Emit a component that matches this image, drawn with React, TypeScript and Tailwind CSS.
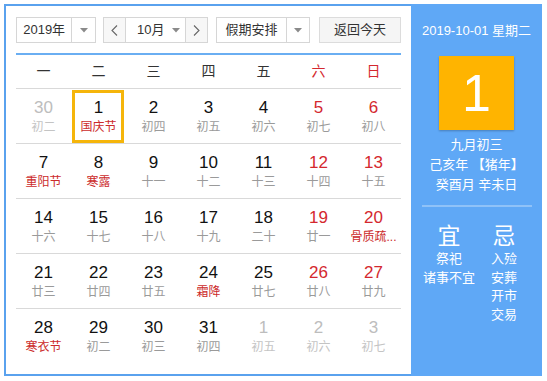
import React from "react";

type Cell = { d: number; l: string; other?: boolean; redNum?: boolean; redL?: boolean; sel?: boolean };

const rows: Cell[][] = [
  [
    { d: 30, l: "初二", other: true },
    { d: 1, l: "国庆节", redL: true, sel: true },
    { d: 2, l: "初四" },
    { d: 3, l: "初五" },
    { d: 4, l: "初六" },
    { d: 5, l: "初七", redNum: true },
    { d: 6, l: "初八", redNum: true },
  ],
  [
    { d: 7, l: "重阳节", redL: true },
    { d: 8, l: "寒露", redL: true },
    { d: 9, l: "十一" },
    { d: 10, l: "十二" },
    { d: 11, l: "十三" },
    { d: 12, l: "十四", redNum: true },
    { d: 13, l: "十五", redNum: true },
  ],
  [
    { d: 14, l: "十六" },
    { d: 15, l: "十七" },
    { d: 16, l: "十八" },
    { d: 17, l: "十九" },
    { d: 18, l: "二十" },
    { d: 19, l: "廿一", redNum: true },
    { d: 20, l: "骨质疏...", redNum: true, redL: true },
  ],
  [
    { d: 21, l: "廿三" },
    { d: 22, l: "廿四" },
    { d: 23, l: "廿五" },
    { d: 24, l: "霜降", redL: true },
    { d: 25, l: "廿七" },
    { d: 26, l: "廿八", redNum: true },
    { d: 27, l: "廿九", redNum: true },
  ],
  [
    { d: 28, l: "寒衣节", redL: true },
    { d: 29, l: "初二" },
    { d: 30, l: "初三" },
    { d: 31, l: "初四" },
    { d: 1, l: "初五", other: true },
    { d: 2, l: "初六", other: true },
    { d: 3, l: "初七", other: true },
  ],
];

const weekdays = ["一", "二", "三", "四", "五", "六", "日"];

function Caret() {
  return (
    <svg width="8" height="5" viewBox="0 0 8 5">
      <polygon points="0,0 8,0 4,4.5" fill="#8a8a8a" />
    </svg>
  );
}

function Chevron({ dir }: { dir: "l" | "r" }) {
  return (
    <svg width="7" height="11" viewBox="0 0 7 11">
      <polyline
        points={dir === "l" ? "6,0.5 1,5.5 6,10.5" : "1,0.5 6,5.5 1,10.5"}
        fill="none"
        stroke="#666"
        strokeWidth="1.1"
      />
    </svg>
  );
}

export default function App() {
  return (
    <div className="w-[547px] h-[381px] bg-white pt-[4px] pl-[4px] font-['Liberation_Sans','Noto_Sans_CJK_SC',sans-serif]">
      <div className="flex w-[538px] h-[372px]">
        {/* calendar */}
        <div className="w-[407px] h-full border-2 border-r-0 border-[#5aa2ee] px-[10px] pt-[11px] flex flex-col">
          {/* header */}
          <div className="flex h-[26px] text-[13px] text-[#333]">
            <div className="w-[80px] h-full flex border border-[#d6d6d6] bg-white">
              <div className="w-[55px] flex items-center justify-center">2019年</div>
              <div className="w-[24px] border-l border-[#d6d6d6] flex items-center justify-center">
                <Caret />
              </div>
            </div>
            <div className="ml-[7px] w-[105px] h-full flex border border-[#d6d6d6] bg-white">
              <div className="w-[21px] flex items-center justify-center bg-[#f7f7f7]">
                <Chevron dir="l" />
              </div>
              <div className="flex-1 border-l border-r border-[#d6d6d6] flex items-center pl-[11px] gap-[8px]">
                <span>10月</span>
                <Caret />
              </div>
              <div className="w-[21px] flex items-center justify-center bg-[#f7f7f7]">
                <Chevron dir="r" />
              </div>
            </div>
            <div className="ml-[8px] w-[94px] h-full flex border border-[#d6d6d6] bg-white">
              <div className="w-[69px] flex items-center justify-center">假期安排</div>
              <div className="flex-1 border-l border-[#d6d6d6] flex items-center justify-center">
                <Caret />
              </div>
            </div>
            <div className="ml-[9px] w-[82px] h-full border border-[#dcdcdc] bg-[#f5f5f5] flex items-center justify-center">
              返回今天
            </div>
          </div>
          <div className="mt-[10px] h-[2px] bg-[#6aaef2]" />
          {/* weekdays */}
          <div className="grid grid-cols-7 h-[34px] border-b border-[#d9d9d9] text-[14px]">
            {weekdays.map((w, i) => (
              <div
                key={w}
                className={`flex items-center justify-center ${i >= 5 ? "text-[#d4282e]" : "text-[#333]"}`}
              >
                {w}
              </div>
            ))}
          </div>
          {rows.map((r, ri) => (
            <div
              key={ri}
              className={`grid grid-cols-7 h-[55px] ${ri < rows.length - 1 ? "border-b border-[#d9d9d9]" : ""}`}
            >
              {r.map((c, ci) => (
                <div key={ci} className="relative flex flex-col items-center pt-[9px]">
                  {c.sel && (
                    <div className="absolute left-[1px] right-[2px] top-[1px] bottom-0 border-[3px] border-[#f5b50a]" />
                  )}
                  <div
                    className={`text-[17px] leading-[20px] ${
                      c.other ? "text-[#bdbdbd]" : c.redNum ? "text-[#d4282e]" : "text-[#111]"
                    }`}
                  >
                    {c.d}
                  </div>
                  <div
                    className={`text-[12px] leading-[16px] mt-[1px] whitespace-nowrap ${
                      c.other ? "text-[#c4c4c4]" : c.redL ? "text-[#cc2b2b]" : "text-[#9a9a9a]"
                    }`}
                  >
                    {c.l}
                  </div>
                </div>
              ))}
            </div>
          ))}
        </div>
        {/* sidebar */}
        <div className="w-[131px] h-full bg-[#5fa8f6] flex flex-col items-center text-white pt-[18px]">
          <div className="text-[13px] leading-[18px]">2019-10-01 星期二</div>
          <div className="mt-[16px] w-[75px] h-[74px] bg-[#ffb400] shadow-[0_1px_2px_rgba(0,0,0,0.25)] flex items-center justify-center text-[52px] leading-none text-white">
            1
          </div>
          <div className="mt-[5px] text-[13px] leading-[20px] text-center">
            <div>九月初三</div>
            <div>己亥年 【猪年】</div>
            <div>癸酉月 辛未日</div>
          </div>
          <div className="mt-[10px] w-[110px] h-[2px] bg-[#8fc2f8]" />
          <div className="mt-[16px] w-[110px] grid grid-cols-2">
            <div className="flex flex-col items-center">
              <div className="text-[23px] leading-[26px]">宜</div>
              <div className="mt-[1px] text-[13px] leading-[18.5px] text-center">
                <div>祭祀</div>
                <div>诸事不宜</div>
              </div>
            </div>
            <div className="flex flex-col items-center">
              <div className="text-[23px] leading-[26px]">忌</div>
              <div className="mt-[1px] text-[13px] leading-[18.5px] text-center">
                <div>入殓</div>
                <div>安葬</div>
                <div>开市</div>
                <div>交易</div>
              </div>
            </div>
          </div>
        </div>
      </div>
    </div>
  );
}
